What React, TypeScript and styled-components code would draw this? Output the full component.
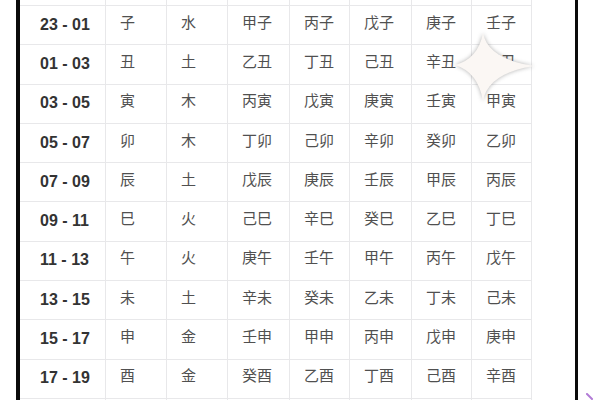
import React from "react";
import styled, { createGlobalStyle } from "styled-components";

const GlobalStyle = createGlobalStyle`
  html, body {
    margin: 0;
    padding: 0;
    background: #ffffff;
  }
`;

const Page = styled.div`
  display: flex;
  height: 400px;
  width: 600px;
  overflow: hidden;
  padding-left: 16px;
  box-sizing: border-box;
  background: #fff;
  position: relative;
`;

const Frame = styled.div`
  width: 562px;
  height: 400px;
  box-sizing: border-box;
  border-left: 4px solid #0a0a0a;
  border-right: 3px solid #0a0a0a;
  overflow: hidden;
`;

const Table = styled.div`
  display: grid;
  grid-template-columns: 86px 61px 61px 62px 60px 62px 60px 60px;
  grid-auto-rows: 39.3px;
  margin-top: -33.3px;
  width: 512px;
`;

const Cell = styled.div<{ $time?: boolean }>`
  display: flex;
  align-items: center;
  box-sizing: border-box;
  padding-left: ${(p) => (p.$time ? "20px" : "14px")};
  padding-bottom: ${(p) => (p.$time ? "1px" : "8px")};
  line-height: 1;
  border-right: 1px solid #e8e8ea;
  border-bottom: 1px solid #e8e8ea;
  font-family: ${(p) =>
    p.$time
      ? `"Liberation Sans", Arial, sans-serif`
      : `"Noto Sans CJK SC", "Noto Sans", sans-serif`};
  font-size: ${(p) => (p.$time ? "16px" : "15px")};
  font-weight: ${(p) => (p.$time ? 700 : 400)};
  color: ${(p) => (p.$time ? "#333333" : "#505050")};
  white-space: nowrap;
`;

const Sparkle = styled.svg`
  position: absolute;
  left: 450px;
  top: 28px;
  width: 90px;
  height: 80px;
  filter: drop-shadow(0 0 2px rgba(80, 80, 80, 0.45));
`;

const Mark = styled.svg`
  position: absolute;
  left: 585px;
  top: 393px;
  width: 9px;
  height: 7px;
`;

const rows: string[][] = [
  ["23 - 01", "子", "水", "甲子", "丙子", "戊子", "庚子", "壬子"],
  ["01 - 03", "丑", "土", "乙丑", "丁丑", "己丑", "辛丑", "癸丑"],
  ["03 - 05", "寅", "木", "丙寅", "戊寅", "庚寅", "壬寅", "甲寅"],
  ["05 - 07", "卯", "木", "丁卯", "己卯", "辛卯", "癸卯", "乙卯"],
  ["07 - 09", "辰", "土", "戊辰", "庚辰", "壬辰", "甲辰", "丙辰"],
  ["09 - 11", "巳", "火", "己巳", "辛巳", "癸巳", "乙巳", "丁巳"],
  ["11 - 13", "午", "火", "庚午", "壬午", "甲午", "丙午", "戊午"],
  ["13 - 15", "未", "土", "辛未", "癸未", "乙未", "丁未", "己未"],
  ["15 - 17", "申", "金", "壬申", "甲申", "丙申", "戊申", "庚申"],
  ["17 - 19", "酉", "金", "癸酉", "乙酉", "丁酉", "己酉", "辛酉"],
];

const emptyRow = Array.from({ length: 8 }, () => "");

export default function App() {
  return (
    <>
      <GlobalStyle />
      <Page>
        <Frame>
          <Table>
            {emptyRow.map((_, i) => (
              <Cell key={"top" + i} $time={i === 0} />
            ))}
            {rows.map((row, r) =>
              row.map((text, c) => (
                <Cell key={r + "-" + c} $time={c === 0}>
                  {text}
                </Cell>
              ))
            )}
            {emptyRow.map((_, i) => (
              <Cell key={"bottom" + i} $time={i === 0} />
            ))}
          </Table>
        </Frame>
        <Sparkle viewBox="0 0 90 80">
          <path
            d="M33,5 Q38,31 84,38 Q38,45 33,73 Q28,44 5,37 Q28,31 33,5 Z"
            fill="#fbf7f4"
          />
        </Sparkle>
        <Mark viewBox="0 0 9 7">
          <path d="M2,1 L7,6" stroke="#b27bd6" strokeWidth="2" strokeLinecap="round" />
        </Mark>
      </Page>
    </>
  );
}
